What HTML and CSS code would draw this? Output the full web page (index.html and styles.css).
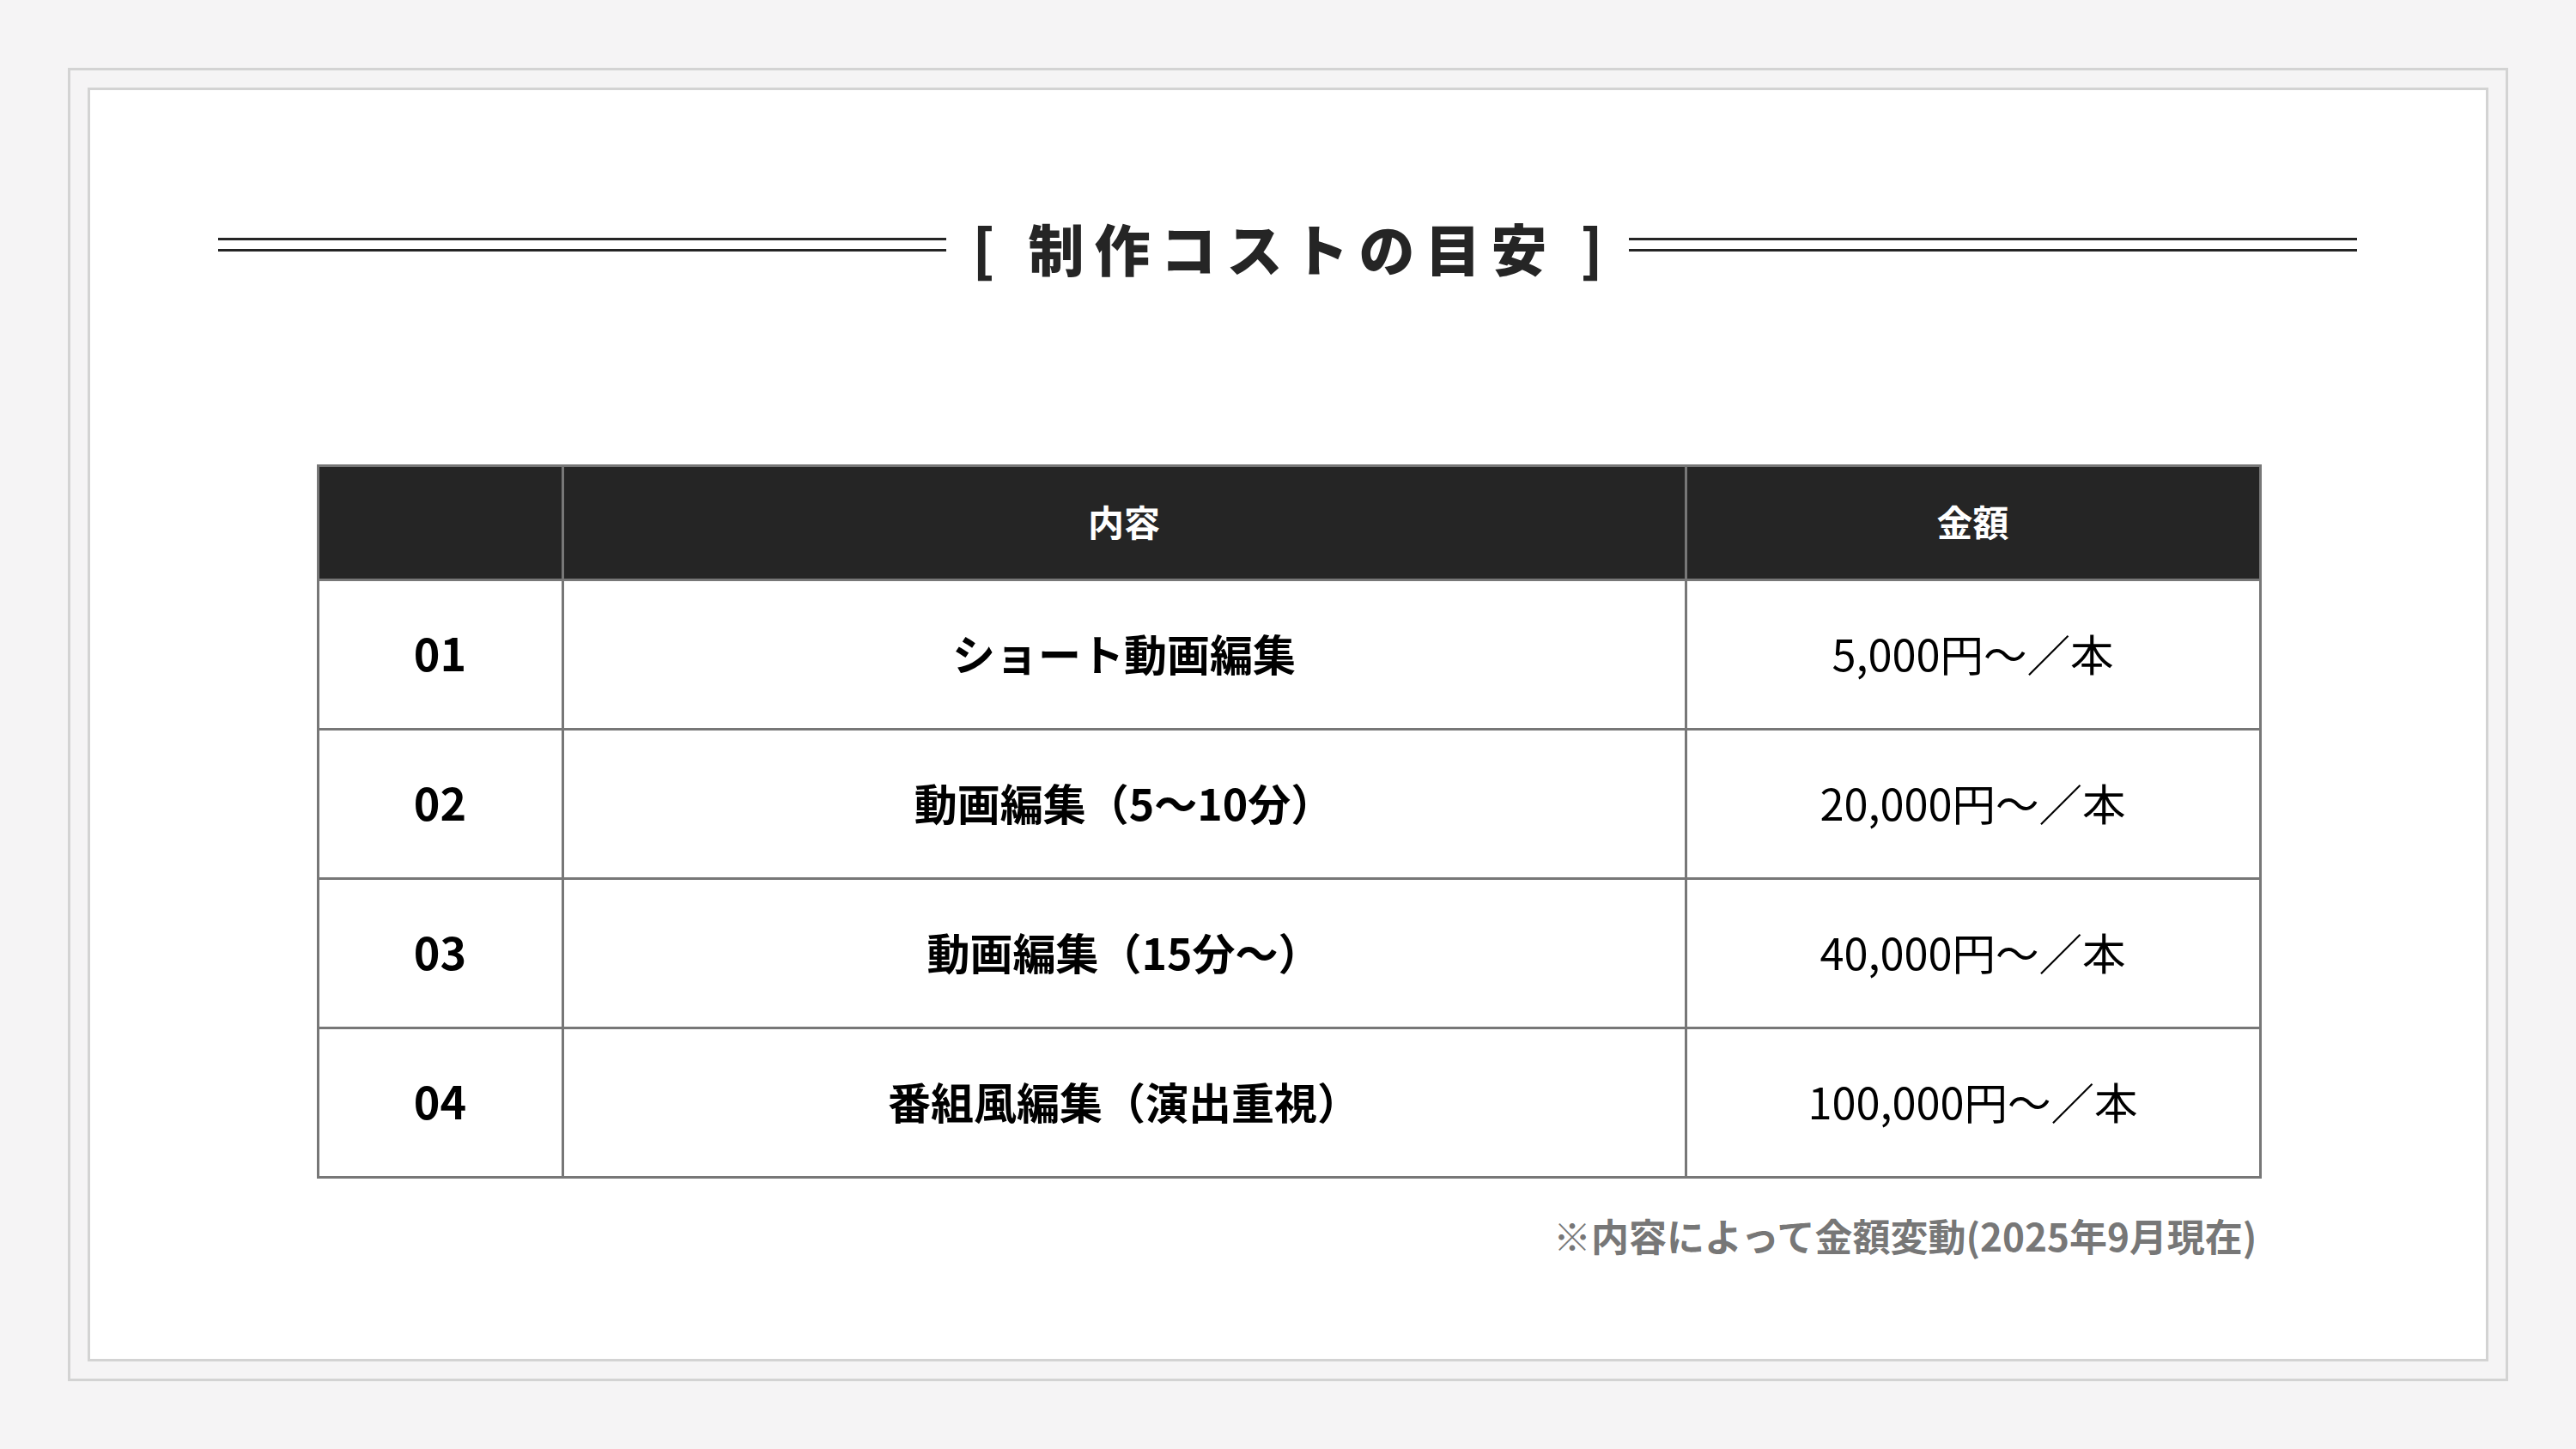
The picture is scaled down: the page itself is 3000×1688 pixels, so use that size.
FILE: index.html
```html
<!DOCTYPE html>
<html lang="ja">
<head>
<meta charset="utf-8">
<title>制作コストの目安</title>
<link rel="stylesheet" href="styles.css">
</head>
<body>
<div class="frame">
  <div class="sheet">
    <div class="title-row">
      <span class="rule"></span>
      <h2 class="title">[ 制作コストの目安 ]</h2>
      <span class="rule"></span>
    </div>
    <div class="table-wrap">
      <table class="cost">
        <colgroup>
          <col class="c-no">
          <col class="c-item">
          <col class="c-price">
        </colgroup>
        <thead>
          <tr>
            <th></th>
            <th>内容</th>
            <th>金額</th>
          </tr>
        </thead>
        <tbody>
          <tr>
            <td class="no">01</td>
            <td class="item">ショート動画編集</td>
            <td class="price">5,000円〜／本</td>
          </tr>
          <tr>
            <td class="no">02</td>
            <td class="item">動画編集（5〜10分）</td>
            <td class="price">20,000円〜／本</td>
          </tr>
          <tr>
            <td class="no">03</td>
            <td class="item">動画編集（15分〜）</td>
            <td class="price">40,000円〜／本</td>
          </tr>
          <tr>
            <td class="no">04</td>
            <td class="item">番組風編集（演出重視）</td>
            <td class="price">100,000円〜／本</td>
          </tr>
        </tbody>
      </table>
      <p class="note">※内容によって金額変動(2025年9月現在)</p>
    </div>
  </div>
</div>
</body>
</html>
```

FILE: styles.css
```css
html, body {
  margin: 0;
  padding: 0;
}

body {
  background: #f5f4f5;
  font-family: "Noto Sans CJK JP", "Noto Sans", sans-serif;
  color: #111;
}

.frame {
  margin: 79px;
  border: 3px solid #d3d3d3;
  padding: 20px;
  height: 1484px;
}

.sheet {
  box-sizing: border-box;
  height: 1484px;
  background: #ffffff;
  border: 3px solid #d3d3d3;
  padding: 143px 150px 0 149px;
}

.title-row {
  display: flex;
  align-items: center;
  gap: 19px;
  height: 80px;
}

.rule {
  flex: 1;
  border-top: 3px solid #252525;
  border-bottom: 3px solid #252525;
  box-sizing: content-box;
  height: 10px;
  margin-top: -6px;
}

.title {
  margin: 0;
  font-size: 65px;
  font-weight: 900;
  letter-spacing: 12px;
  line-height: 80px;
  color: #252525;
  padding-left: 12px;
  white-space: nowrap;
}

.table-wrap {
  width: 2262px;
  margin: 213px auto 0;
}

.cost {
  width: 2262px;
  border-collapse: collapse;
  table-layout: fixed;
  border: 3px solid #777;
}

.c-no { width: 285px; }
.c-item { width: 1308px; }
.c-price { width: 669px; }

.cost th,
.cost td {
  border: 3px solid #777;
  text-align: center;
  padding: 0 0 6px;
}

.cost th {
  background: #252525;
  color: #ffffff;
  font-size: 42px;
  font-weight: 700;
  height: 124px;
}

.cost td {
  height: 165px;
  background: #ffffff;
  color: #000;
}

.cost td.no {
  font-size: 52px;
  font-weight: 700;
}

.cost td.item {
  font-size: 50px;
  font-weight: 700;
}

.cost td.price {
  font-size: 50.5px;
  font-weight: 400;
}

.note {
  margin: 36px 0 0;
  text-align: right;
  font-size: 44px;
  line-height: 60px;
  font-weight: 700;
  color: #777;
  padding-right: 2px;
}
```
